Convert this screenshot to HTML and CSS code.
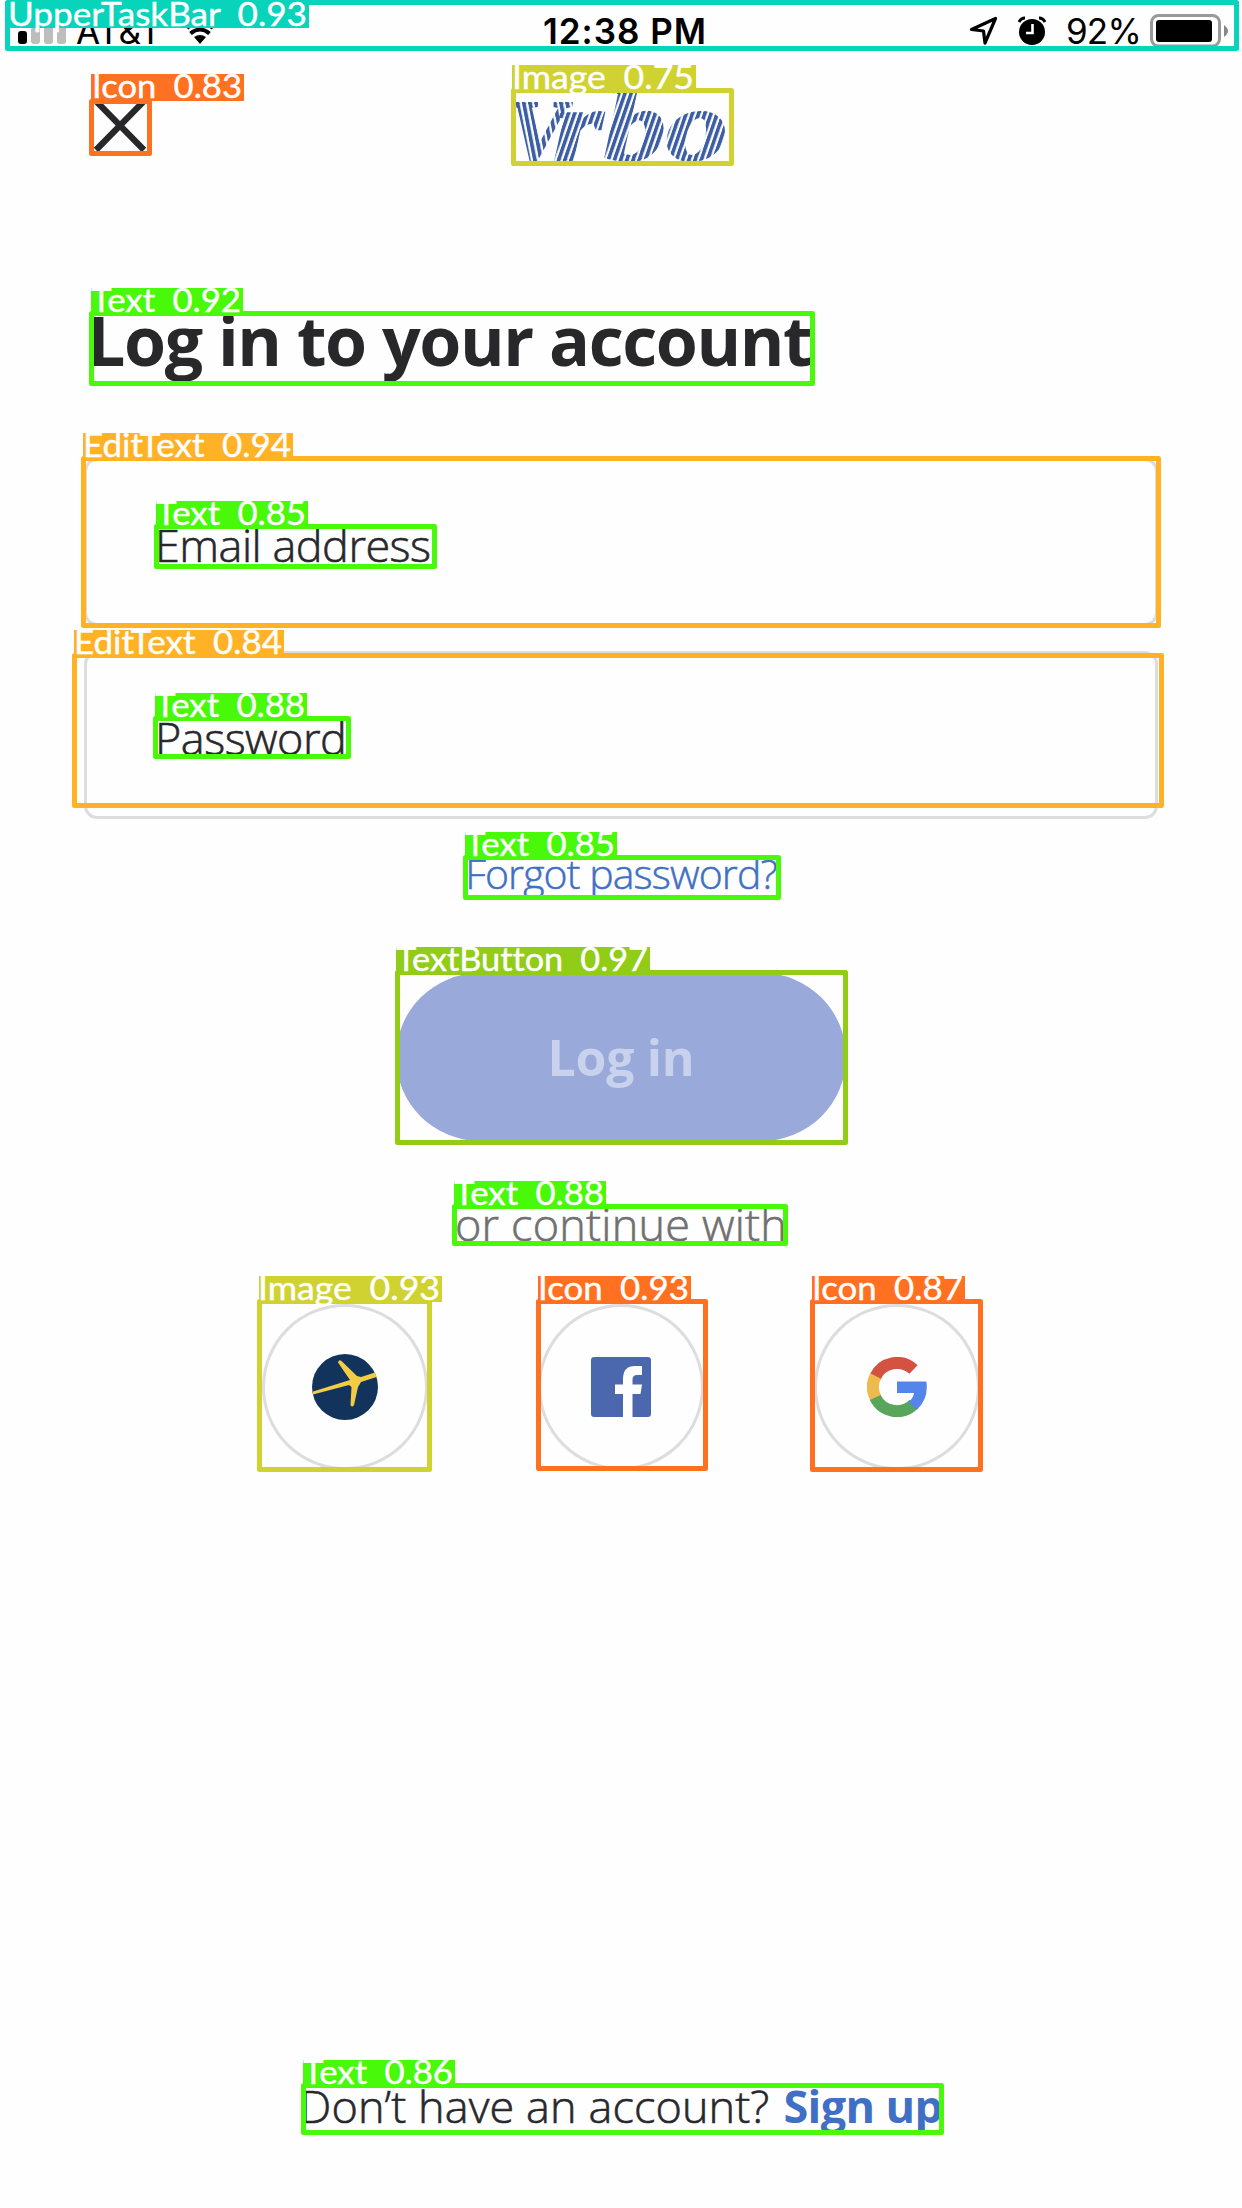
FILE: index.html
```html
<!DOCTYPE html>
<html lang="en">
<head>
<meta charset="utf-8">
<title>Vrbo – Log in</title>
<link rel="stylesheet" href="styles.css">
</head>
<body>
<main class="screen">
  <div class="status">
    <div class="status-left">
      <svg class="signal" width="50" height="28" viewBox="0 0 50 28"><rect x="0" y="14" width="9" height="13" rx="3"/><g fill="#bdbdbd"><rect x="13" y="10" width="9" height="17" rx="3"/><rect x="26" y="5" width="9" height="22" rx="3"/><rect x="39" y="0" width="9" height="27" rx="3"/></g></svg>
      <span class="carrier">AT&amp;T</span>
      <svg width="28" height="28" viewBox="0 0 28 28"><path d="M8 20Q14 16 20 20L14 27Z"/><path d="M4.500 16.500Q14 8.500 23.500 16.500" fill="none" stroke="#000" stroke-width="4"/><path d="M1 11Q14 0 27 11" fill="none" stroke="#000" stroke-width="4"/></svg>
    </div>
    <span class="clock">12:38 PM</span>
    <div class="status-right">
      <svg width="30" height="30" viewBox="0 0 30 30"><path d="M2.500 13.500L26.500 2.500L16 27L14.500 15Z" fill="none" stroke="#000" stroke-width="3.200" stroke-linejoin="round"/></svg>
      <svg class="alarm" width="30" height="30" viewBox="0 0 30 30"><circle cx="15" cy="16" r="13"/><path d="M2 6Q4 2 8 2M22 2Q26 2 28 6" fill="none" stroke="#000" stroke-width="3"/><path d="M15.500 8V17H9" fill="none" stroke="#fff" stroke-width="2.600"/></svg>
      <span class="percent">92%</span>
      <svg class="battery" width="78" height="34" viewBox="0 0 78 34"><rect x="1.500" y="1.500" width="68" height="30.500" rx="7" fill="none" stroke="#999" stroke-width="3"/><rect x="6" y="6" width="56" height="22" rx="3"/><path d="M74 11Q78 14 78 17T74 23Z" fill="#888"/></svg>
    </div>
  </div>
  <header class="header">
    <svg class="close" width="54" height="54" viewBox="0 0 54 54"><path d="M3 2L51 51M51 2L3 51" stroke="#28282b" stroke-width="6.200"/></svg>
    <svg class="logo" width="216" height="76" viewBox="0 0 216 76">
      <defs>
        <pattern id="down" width="6.200" height="80" patternUnits="userSpaceOnUse" patternTransform="skewX(11)"><rect width="3.800" height="80" fill="#3d5ea4"/></pattern>
        <pattern id="up" width="6.200" height="80" patternUnits="userSpaceOnUse" patternTransform="skewX(-19)"><rect width="3.800" height="80" fill="#3d5ea4"/></pattern>
      </defs>
      <g class="wordmark"><text class="down" x="-4" y="72" font-size="88" textLength="57" lengthAdjust="spacingAndGlyphs">V</text><text class="up" x="40" y="71" font-size="102" textLength="50" lengthAdjust="spacingAndGlyphs">r</text><text class="up" x="91" y="71" font-size="102" textLength="62" lengthAdjust="spacingAndGlyphs">b</text><text class="up" x="153" y="71" font-size="102" textLength="62" lengthAdjust="spacingAndGlyphs">o</text></g>
    </svg>
  </header>
  <h1 class="title">Log in to your account</h1>
  <div class="fields">
    <div class="field">Email address</div>
    <div class="field">Password</div>
  </div>
  <a class="forgot">Forgot password?</a>
  <button class="login">Log in</button>
  <p class="or">or continue with</p>
  <div class="social">
    <div class="provider"><svg width="66" height="66" viewBox="0 0 66 66"><circle cx="33" cy="33" r="33" fill="#12335c"/><path d="M1 37.500L38 26L26 8.500Q27 5 29.500 7L45 22L49 23L63 18.500L64.500 23L49 28L46 33L42 51Q40 54 38.500 51L39.500 33L37 31L1 40.500Z" fill="#f4cb45"/></svg></div>
    <div class="provider"><svg width="60" height="60" viewBox="0 0 60 60"><rect width="60" height="60" rx="3.300" fill="#4b67ad"/><path d="M32 60V37H24V27.500H32V22Q32 9 44 9H51V18H46Q41.500 18 41.500 22.500V27.500H51L49.500 37H41.500V60Z" fill="#fff"/></svg></div>
    <div class="provider"><svg width="60" height="60" viewBox="0 0 60 60"><g fill="none" stroke-width="12"><path d="M8.200 20A24 24 0 0 1 46.500 12.500" stroke="#d45242"/><path d="M8.600 41A24 24 0 0 1 8.600 19" stroke="#edba4d"/><path d="M47 47A24 24 0 0 1 8.300 40.500" stroke="#58a65c"/></g><path d="M30 24.500H59.300Q62 41.500 50 52.500L41 45.500Q46 42 47 36H30Z" fill="#5585ea"/></svg></div>
  </div>
  <footer class="signup"><span class="ask">Don’t have an account?</span><a class="join">Sign up</a></footer>
</main>
<svg class="detections" width="1242" height="2208" viewBox="0 0 1242 2208">
  <g class="teal"><rect class="box" x="7.500" y="2.500" width="1229" height="46"/><rect class="tag" x="7" y="0" width="302" height="28"/><text x="8" y="26" textLength="299" lengthAdjust="spacingAndGlyphs">UpperTaskBar 0.93</text></g>
  <g class="orange"><rect class="box" x="91.500" y="101.500" width="58" height="52"/><rect class="tag" x="91" y="74" width="153" height="27"/><text x="92" y="98" textLength="150" lengthAdjust="spacingAndGlyphs">Icon 0.83</text>
    <rect class="box" x="538.500" y="1301.500" width="167" height="167"/><rect class="tag" x="538" y="1276" width="153" height="26"/><text x="538" y="1300" textLength="151" lengthAdjust="spacingAndGlyphs">Icon 0.93</text>
    <rect class="box" x="812.500" y="1301.500" width="168" height="168"/><rect class="tag" x="812" y="1276" width="153" height="26"/><text x="812" y="1300" textLength="151" lengthAdjust="spacingAndGlyphs">Icon 0.87</text></g>
  <g class="yellow"><rect class="box" x="513.500" y="90.500" width="218" height="73"/><rect class="tag" x="512" y="65" width="184" height="26"/><text x="512" y="89" textLength="182" lengthAdjust="spacingAndGlyphs">Image 0.75</text>
    <rect class="box" x="259.500" y="1301.500" width="170" height="168"/><rect class="tag" x="259" y="1276" width="183" height="26"/><text x="258" y="1300" textLength="182" lengthAdjust="spacingAndGlyphs">Image 0.93</text></g>
  <g class="amber"><rect class="box" x="83.500" y="458.500" width="1075" height="167"/><rect class="tag" x="83" y="433" width="210" height="25"/><text x="83" y="457" textLength="208" lengthAdjust="spacingAndGlyphs">EditText 0.94</text>
    <rect class="box" x="74.500" y="655.500" width="1087" height="150"/><rect class="tag" x="74" y="630" width="210" height="26"/><text x="74" y="654" textLength="208" lengthAdjust="spacingAndGlyphs">EditText 0.84</text></g>
  <g class="olive"><rect class="box" x="397.500" y="972.500" width="448" height="170"/><rect class="tag" x="396" y="947" width="254" height="26"/><text x="396" y="971" textLength="252" lengthAdjust="spacingAndGlyphs">TextButton 0.97</text></g>
  <g class="green"><rect class="box" x="91.500" y="313.500" width="721" height="70"/><rect class="tag" x="91" y="288" width="152" height="26"/><text x="91" y="312" textLength="150" lengthAdjust="spacingAndGlyphs">Text 0.92</text>
    <rect class="box" x="156.500" y="526.500" width="278" height="40"/><rect class="tag" x="156" y="501" width="152" height="26"/><text x="156" y="525" textLength="150" lengthAdjust="spacingAndGlyphs">Text 0.85</text>
    <rect class="box" x="155.500" y="718.500" width="193" height="38"/><rect class="tag" x="155" y="693" width="152" height="26"/><text x="155" y="717" textLength="150" lengthAdjust="spacingAndGlyphs">Text 0.88</text>
    <rect class="box" x="465.500" y="857.500" width="313" height="40"/><rect class="tag" x="465" y="832" width="152" height="26"/><text x="465" y="856" textLength="150" lengthAdjust="spacingAndGlyphs">Text 0.85</text>
    <rect class="box" x="454.500" y="1206.500" width="331" height="37"/><rect class="tag" x="454" y="1181" width="152" height="26"/><text x="454" y="1205" textLength="150" lengthAdjust="spacingAndGlyphs">Text 0.88</text>
    <rect class="box" x="303.500" y="2085.500" width="638" height="47"/><rect class="tag" x="303" y="2060" width="152" height="26"/><text x="303" y="2084" textLength="150" lengthAdjust="spacingAndGlyphs">Text 0.86</text></g>
</svg>
</body>
</html>
```
FILE: styles.css
```css
* { box-sizing: border-box; }
body { margin: 0; background: #fefefe; color: #28282b; font-family: "Open Sans", sans-serif; }
.screen { display: flex; flex-direction: column; width: 1242px; height: 2208px; overflow: hidden; }
.status { display: grid; grid-template-columns: 1fr auto 1fr; align-items: center; height: 60px; padding: 1px 14px 0 18px; color: #000; font-family: Inter, sans-serif; font-size: 35px; line-height: 60px; }
.status-left, .status-right { display: flex; align-items: center; }
.status-right { justify-content: flex-end; }
.carrier { margin: 0 24px 0 8px; }
.clock { padding-left: 4px; font-weight: 600; letter-spacing: 1px; }
.alarm { margin: 0 19px 0 18px; }
.percent { letter-spacing: -0.8px; }
.battery { margin-left: 9px; }
.header { display: grid; grid-template-columns: 1fr auto 1fr; height: 110px; padding: 29px 93px 0; }
.close { margin-top: 10px; }
.logo { overflow: visible; }
.wordmark { font-family: "Liberation Serif", serif; font-weight: 700; font-style: italic; stroke-width: 2; }
.down { fill: url(#down); stroke: url(#down); }
.up { fill: url(#up); stroke: url(#up); }
.title { margin: 124px 0 0 87px; font-size: 68px; line-height: 92px; font-weight: 700; font-stretch: 90%; letter-spacing: -1.4px; }
.fields { display: flex; flex-direction: column; gap: 25px; margin: 72px 84px 0; }
.field { height: 168px; padding: 54px 68px; border: 3px solid #ddd; border-radius: 13px; font-size: 45px; line-height: 60px; font-weight: 300; font-stretch: 90%; letter-spacing: -0.5px; -webkit-text-stroke: 0.6px; }
.forgot { align-self: center; margin-top: 26px; font-size: 41px; line-height: 56px; font-weight: 300; font-stretch: 90%; letter-spacing: -0.9px; color: #3f70c6; -webkit-text-stroke: 0.5px; }
.login { align-self: center; width: 450px; height: 168px; margin-top: 72px; border: 0; border-radius: 84px; background: #98a9da; color: #c8d2ec; font: 700 50px "Open Sans", sans-serif; font-stretch: 90%; letter-spacing: -0.3px; }
.or { align-self: center; margin: 53px 0 0; font-size: 45px; line-height: 60px; font-weight: 300; letter-spacing: 0.2px; color: #707070; -webkit-text-stroke: 0.6px; }
.social { display: flex; justify-content: center; gap: 110px; margin-top: 50px; }
.provider { display: flex; align-items: center; justify-content: center; width: 166px; height: 166px; border: 3px solid #ddd; border-radius: 50%; }
.signup { display: flex; justify-content: center; gap: 14px; margin: auto 0 72px; font-size: 45px; line-height: 60px; font-weight: 300; font-stretch: 90%; }
.ask { letter-spacing: 0.1px; -webkit-text-stroke: 0.6px; }
.join { font-weight: 700; color: #3f70c6; letter-spacing: -0.6px; }
.detections { position: absolute; top: 0; left: 0; }
.detections text { fill: #fff; stroke: #fff; stroke-width: 0.4; font-family: Lato, sans-serif; font-size: 33px; font-variant-ligatures: none; word-spacing: 8px; }
.box { fill: none; stroke-width: 5; stroke-linejoin: round; }
.teal .tag { fill: #07d4ba; } .teal .box { stroke: #07d4ba; }
.orange .tag { fill: #ff7020; } .orange .box { stroke: #ff7020; }
.yellow .tag { fill: #cfd231; } .yellow .box { stroke: #cfd231; }
.amber .tag { fill: #ffb226; } .amber .box { stroke: #ffb226; }
.olive .tag { fill: #91cc17; } .olive .box { stroke: #91cc17; }
.green .tag { fill: #48f90a; } .green .box { stroke: #48f90a; }
```
